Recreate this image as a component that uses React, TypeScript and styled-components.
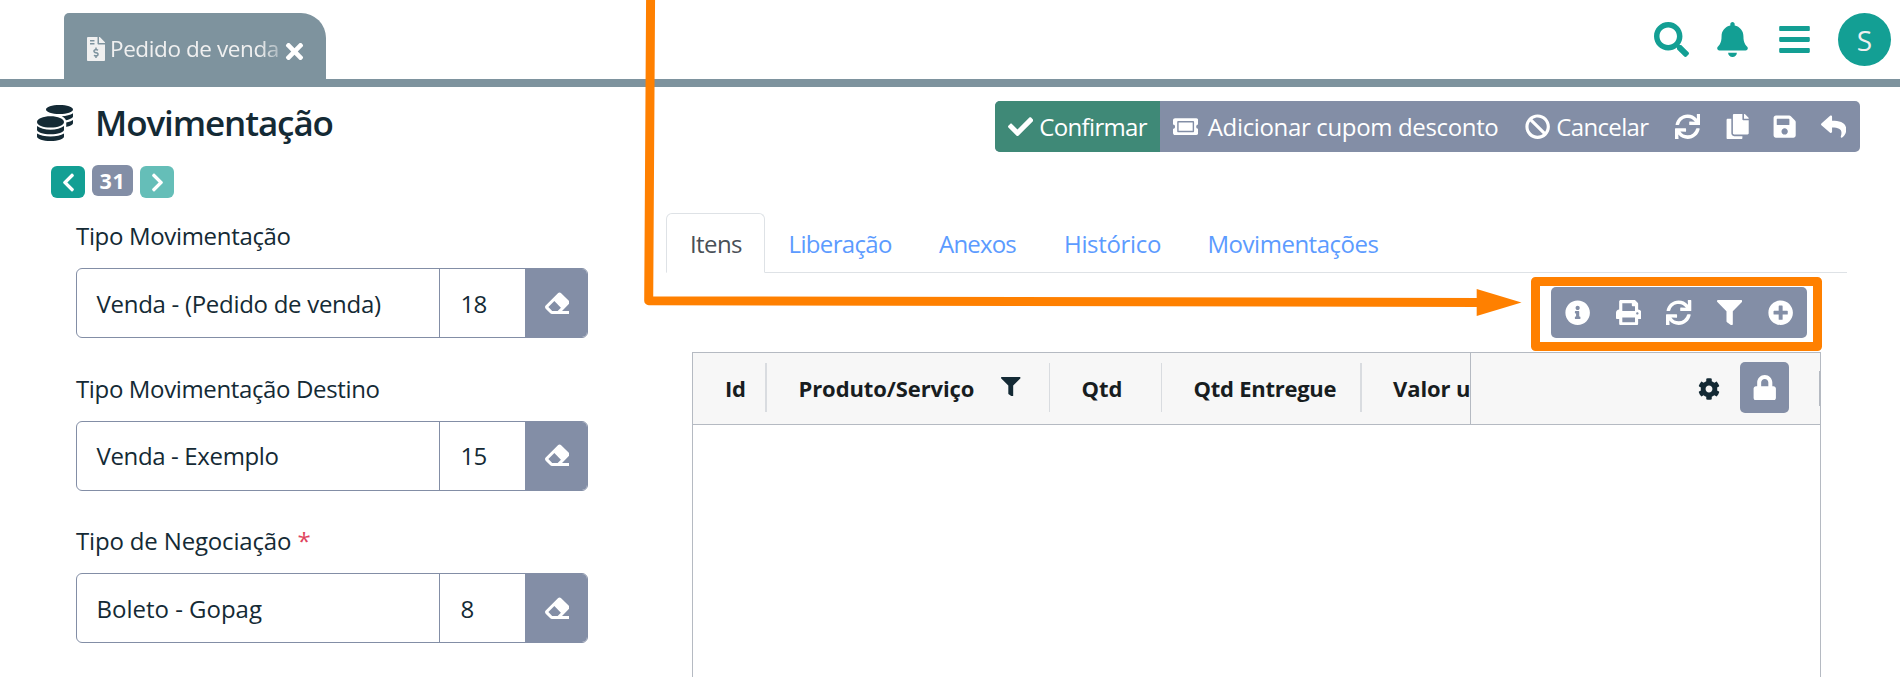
import React from "react";
import styled, { createGlobalStyle, css } from "styled-components";
import {
  FaBan, FaBars, FaBell, FaCheck, FaChevronLeft, FaChevronRight, FaCog, FaCoins, FaCopy,
  FaEraser, FaFileInvoiceDollar, FaFilter, FaInfoCircle, FaLock, FaPlusCircle, FaPrint,
  FaReply, FaSave, FaSearch, FaSync, FaTicketAlt, FaTimes,
} from "react-icons/fa";

const color = {
  ink: "#142a35",
  slate: "#838ea6",
  teal: "#139f94",
  tealSoft: "#65beb8",
  bar: "#7e939e",
  green: "#3f8977",
  link: "#5c9bff",
  orange: "#ff8000",
  line: "#dee2e6",
  grid: "#b5bac2",
};

const GlobalStyle = createGlobalStyle`
  *, *::before, *::after { box-sizing: border-box; }
  body { margin: 0; overflow: hidden; background: #fff; }
  button { font: inherit; color: inherit; border: 0; padding: 0; margin: 0; background: none; }
`;

const Page = styled.div`
  position: relative;
  display: flex;
  flex-direction: column;
  width: 1900px;
  height: 677px;
  overflow: hidden;
  color: ${color.ink};
  font: 400 24px/34px "Open Sans", "Noto Sans", sans-serif;
`;

const Text = styled.span<{ $track?: number }>`
  white-space: pre;
  letter-spacing: ${(p) => p.$track ?? 0}px;
`;

const Glyph = styled.span<{ $size: number }>`
  display: flex;
  flex: none;
  svg {
    display: block;
    width: auto;
    height: ${(p) => p.$size}px;
  }
`;

/* Top bar */
const TopBar = styled.header`
  display: flex;
  justify-content: space-between;
  flex: none;
  height: 87px;
  padding: 13px 9px 0 64px;
  border-bottom: 8px solid ${color.bar};
`;

const PageTab = styled.div`
  display: flex;
  align-items: center;
  width: 262px;
  height: 66px;
  padding-left: 20px;
  border-radius: 5px 25px 0 0;
  background: ${color.bar};
  color: #f0f0f0;
`;

const PageTabTitle = styled(Text)`
  flex: none;
  width: 170px;
  margin: 5px 0 0 2px;
  font-size: 22.5px;
  line-height: 30px;
  mask-image: linear-gradient(to right, #000 148px, rgba(0, 0, 0, 0.45) 168px);
`;

const FileGlyph = styled(Glyph)`
  margin-top: 5px;
`;

const CloseGlyph = styled(Glyph)`
  margin: 11px 0 0 2px;
  color: #fff;
`;

const TopActions = styled.div`
  display: flex;
  align-items: flex-start;
  color: ${color.teal};
`;

const TopAction = styled.button<{ $gap: number }>`
  display: flex;
  margin: 9px ${(p) => p.$gap}px 0 0;
`;

const Avatar = styled.div`
  display: flex;
  align-items: center;
  justify-content: center;
  width: 53px;
  height: 53px;
  padding-top: 1px;
  border-radius: 50%;
  background: ${color.teal};
  color: #f0f0f0;
  font-size: 28px;
`;

/* Body */
const Body = styled.main`
  display: flex;
  flex: 1;
  min-height: 0;
`;

const FormPane = styled.section`
  flex: none;
  width: 660px;
`;

const Heading = styled.div`
  display: flex;
  align-items: center;
  gap: 22px;
  height: 36px;
  margin: 18px 0 0 37px;
`;

const Title = styled.h1`
  margin: -1px 0 0;
  font-size: 35px;
  font-weight: 550;
  line-height: 44px;
  letter-spacing: -1.1px;
`;

const Pager = styled.div`
  display: flex;
  gap: 7px;
  margin: 24px 0 0 51px;
  color: #fff;
`;

const PagerButton = styled.button<{ $soft?: boolean }>`
  display: flex;
  align-items: center;
  justify-content: center;
  width: 34px;
  height: 32px;
  margin-top: 1px;
  border-radius: 6px;
  background: ${(p) => (p.$soft ? color.tealSoft : color.teal)};
`;

const PagerCount = styled.span`
  width: 41px;
  height: 31px;
  border-radius: 6px;
  background: ${color.slate};
  font-size: 21.5px;
  font-weight: 700;
  line-height: 32px;
  letter-spacing: 0.6px;
  text-align: center;
`;

const Fields = styled.div`
  display: flex;
  flex-direction: column;
  gap: 33.5px;
  margin: 21px 0 0 76px;
`;

const Field = styled.div`
  width: 512px;
`;

const Label = styled.label`
  display: block;
  height: 34px;
  margin-bottom: 15px;
  white-space: pre;
`;

const Required = styled.span`
  color: #e0455e;
`;

const InputGroup = styled.div`
  display: flex;
  height: 70px;
  border: 1px solid ${color.slate};
  border-radius: 6px;
  overflow: hidden;
`;

const Value = styled.div`
  display: flex;
  align-items: center;
  flex: 1;
  padding: 1px 0 0 19.5px;
`;

const Code = styled.div`
  display: flex;
  align-items: center;
  width: 86px;
  padding: 1px 0 0 20.5px;
  border-left: 1px solid ${color.slate};
`;

const ClearButton = styled.button`
  display: flex;
  align-items: center;
  justify-content: center;
  width: 62px;
  padding-left: 2px;
  background: ${color.slate};
  color: #fff;
`;

const WorkPane = styled.section`
  display: flex;
  flex-direction: column;
  flex: 1;
  min-width: 0;
  padding-left: 6px;
`;

const toolbar = css`
  display: flex;
  align-self: flex-end;
  flex: none;
  height: 51px;
  border-radius: 5px;
  overflow: hidden;
  background: ${color.slate};
  color: #fff;
`;

const ActionBar = styled.div`
  ${toolbar}
  width: 865px;
  margin: 14px 40px 0 0;
`;

const Action = styled.button<{ $width: number; $gap?: number; $confirm?: boolean }>`
  display: flex;
  align-items: center;
  flex: none;
  gap: ${(p) => p.$gap ?? 0}px;
  width: ${(p) => p.$width}px;
  padding-left: 13px;
  background: ${(p) => (p.$confirm ? color.green : "transparent")};
`;

const Tabs = styled.nav`
  display: flex;
  flex: none;
  height: 60px;
  margin: 61px 53px 0 0;
  border-bottom: 1px solid ${color.line};
`;

const Tab = styled.a<{ $width: number; $active?: boolean }>`
  width: ${(p) => p.$width}px;
  height: 60px;
  padding: 13px 0 0 23px;
  border: 1px solid transparent;
  color: ${color.link};
  ${(p) =>
    p.$active &&
    css`
      border-color: ${color.line};
      border-bottom-color: #fff;
      border-radius: 6px 6px 0 0;
      background: #fff;
      color: #495057;
    `}
`;

const Panel = styled.div`
  display: flex;
  flex-direction: column;
  flex: 1;
  min-height: 0;
  margin: 14px 79px 0 26px;
`;

const GridTools = styled.div`
  ${toolbar}
  justify-content: center;
  width: 256px;
  margin-right: 14px;
`;

const GridTool = styled.button`
  display: flex;
  align-items: center;
  justify-content: center;
  width: 50.7px;
`;

const Grid = styled.div`
  flex: 1;
  margin-top: 14px;
  border: 1px solid ${color.grid};
  border-bottom: 0;
`;

const GridHead = styled.div`
  display: flex;
  height: 72px;
  border-bottom: 1px solid ${color.grid};
  background: #f7f7f7;
  color: #181d1f;
  font-size: 22px;
  font-weight: 700;
`;

const ScrollHead = styled.div`
  display: flex;
  align-items: flex-start;
  width: 777px;
  padding-top: 10px;
  overflow: hidden;
`;

const HeadCell = styled.div<{ $width: number; $rule?: number; $pad: number }>`
  display: flex;
  align-items: center;
  flex: none;
  width: ${(p) => p.$width}px;
  height: 49px;
  padding-left: ${(p) => p.$pad}px;
  border-right: ${(p) => p.$rule ?? 0}px solid #d9dce0;
`;

const HeadFilter = styled(Glyph)`
  margin: -2px 0 0 27px;
  color: ${color.ink};
`;

const PinnedHead = styled.div`
  display: flex;
  align-items: center;
  justify-content: flex-end;
  flex: 1;
  border-left: 1px solid ${color.grid};
  color: ${color.ink};
`;

const LockButton = styled.button`
  display: flex;
  align-items: center;
  justify-content: center;
  width: 49px;
  height: 51px;
  margin: -2px 30px 0 20px;
  border-radius: 5px;
  background: ${color.slate};
  color: #fff;
`;

const ResizeMark = styled.span`
  width: 1px;
  height: 35px;
  background: ${color.grid};
`;

/* Callout drawn over the page */
const Callout = styled.svg`
  position: absolute;
  inset: 0;
  pointer-events: none;
`;

const fields = [
  { label: "Tipo Movimentação", track: -0.33, value: "Venda - (Pedido de venda)", valueTrack: -0.29, code: "18" },
  { label: "Tipo Movimentação Destino", track: -0.36, value: "Venda - Exemplo", valueTrack: -0.36, code: "15" },
  { label: "Tipo de Negociação", track: -0.16, value: "Boleto - Gopag", valueTrack: -0.01, code: "8", required: true },
];

const actions = [
  { icon: <FaCheck />, text: "Confirmar", track: -0.66, gap: 6, width: 165, confirm: true },
  { icon: <FaTicketAlt />, text: "Adicionar cupom desconto", track: -0.35, gap: 9.5, width: 352 },
  { icon: <FaBan />, text: "Cancelar", track: -0.65, gap: 6, width: 150 },
  { icon: <FaSync />, width: 50 },
  { icon: <FaCopy />, width: 47 },
  { icon: <FaSave />, width: 49 },
  { icon: <FaReply />, width: 52 },
];

const tabs = [
  { text: "Itens", track: -0.61, width: 98.5 },
  { text: "Liberação", track: -0.65, width: 150.5 },
  { text: "Anexos", track: -0.8, width: 125 },
  { text: "Histórico", track: -0.32, width: 143.5 },
  { text: "Movimentações", track: -0.48, width: 230 },
];

const gridTools = [<FaInfoCircle />, <FaPrint />, <FaSync />, <FaFilter />, <FaPlusCircle />];

const columns = [
  { text: "Id", track: -0.28, width: 74, rule: 2, pad: 32 },
  { text: "Produto/Serviço", track: -0.1, width: 283, rule: 1, pad: 31.5 },
  { text: "Qtd", track: 0, width: 112, rule: 1, pad: 31.5 },
  { text: "Qtd Entregue", track: -0.26, width: 200, rule: 2, pad: 31.5 },
  { text: "Valor u", track: -0.1, width: 108, pad: 31 },
];

export default function App() {
  return (
    <Page>
      <GlobalStyle />
      <TopBar>
        <PageTab>
          <FileGlyph $size={24}><FaFileInvoiceDollar /></FileGlyph>
          <PageTabTitle $track={-0.4}>Pedido de venda</PageTabTitle>
          <CloseGlyph $size={25}><FaTimes /></CloseGlyph>
        </PageTab>
        <TopActions>
          <TopAction $gap={26.5}><Glyph $size={35}><FaSearch /></Glyph></TopAction>
          <TopAction $gap={26.5}><Glyph $size={35}><FaBell /></Glyph></TopAction>
          <TopAction $gap={26.5}><Glyph $size={35}><FaBars /></Glyph></TopAction>
          <Avatar>S</Avatar>
        </TopActions>
      </TopBar>
      <Body>
        <FormPane>
          <Heading>
            <Glyph $size={36}><FaCoins /></Glyph>
            <Title>Movimentação</Title>
          </Heading>
          <Pager>
            <PagerButton><Glyph $size={21}><FaChevronLeft /></Glyph></PagerButton>
            <PagerCount>31</PagerCount>
            <PagerButton $soft><Glyph $size={21}><FaChevronRight /></Glyph></PagerButton>
          </Pager>
          <Fields>
            {fields.map((f) => (
              <Field key={f.label}>
                <Label>
                  <Text $track={f.track}>{f.label}</Text>
                  {f.required && <Required> *</Required>}
                </Label>
                <InputGroup>
                  <Value><Text $track={f.valueTrack}>{f.value}</Text></Value>
                  <Code><Text $track={-0.6}>{f.code}</Text></Code>
                  <ClearButton><Glyph $size={24.5}><FaEraser /></Glyph></ClearButton>
                </InputGroup>
              </Field>
            ))}
          </Fields>
        </FormPane>
        <WorkPane>
          <ActionBar>
            {actions.map((a, i) => (
              <Action key={i} $width={a.width} $gap={a.gap} $confirm={a.confirm}>
                <Glyph $size={25.3}>{a.icon}</Glyph>
                {a.text && <Text $track={a.track}>{a.text}</Text>}
              </Action>
            ))}
          </ActionBar>
          <Tabs>
            {tabs.map((t, i) => (
              <Tab key={t.text} $width={t.width} $active={i === 0}>
                <Text $track={t.track}>{t.text}</Text>
              </Tab>
            ))}
          </Tabs>
          <Panel>
            <GridTools>
              {gridTools.map((icon, i) => (
                <GridTool key={i}><Glyph $size={25.3}>{icon}</Glyph></GridTool>
              ))}
            </GridTools>
            <Grid>
              <GridHead>
                <ScrollHead>
                  {columns.map((c, i) => (
                    <HeadCell key={c.text} $width={c.width} $rule={c.rule} $pad={c.pad}>
                      <Text $track={c.track}>{c.text}</Text>
                      {i === 1 && <HeadFilter $size={19.5}><FaFilter /></HeadFilter>}
                    </HeadCell>
                  ))}
                </ScrollHead>
                <PinnedHead>
                  <Glyph $size={22}><FaCog /></Glyph>
                  <LockButton><Glyph $size={25.5}><FaLock /></Glyph></LockButton>
                  <ResizeMark />
                </PinnedHead>
              </GridHead>
            </Grid>
          </Panel>
        </WorkPane>
      </Body>
      <Callout width="1900" height="677" viewBox="0 0 1900 677" fill="none">
        <path d="M650.6 -5L648.7 300.7L1480 302.6" stroke={color.orange} strokeWidth="9" strokeLinejoin="round" />
        <path d="M1476.7 289L1521.5 302.6L1476.7 316Z" fill={color.orange} />
        <rect x="1535.5" y="281.5" width="282" height="65" stroke={color.orange} strokeWidth="9" strokeLinejoin="round" />
      </Callout>
    </Page>
  );
}
